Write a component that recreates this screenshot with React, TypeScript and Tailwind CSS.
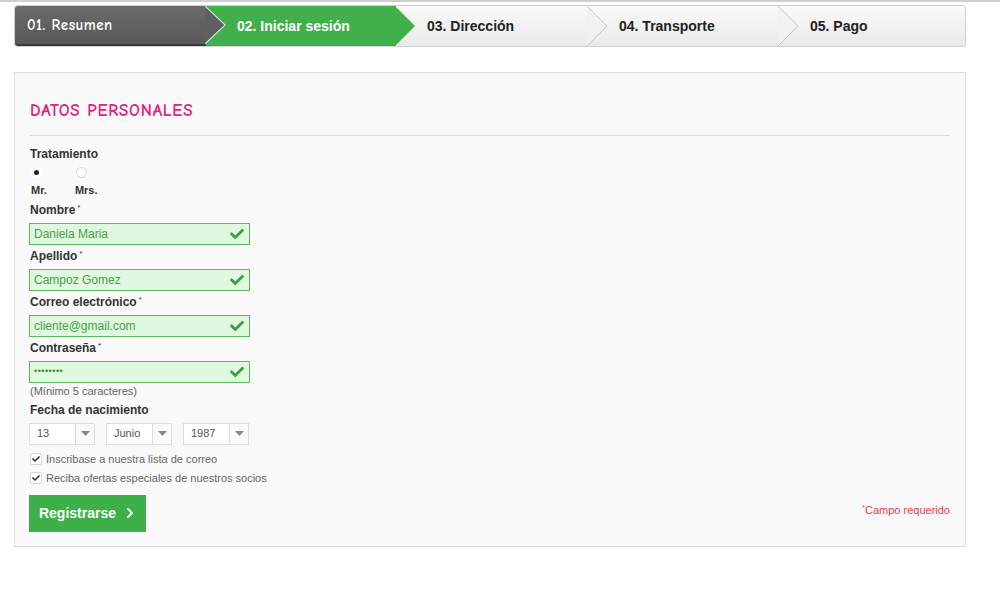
import { FaCheck, FaChevronRight } from "react-icons/fa";

const steps = [
  { label: "01. Resumen", w: "w-[191px]", kind: "done" },
  { label: "02. Iniciar sesión", w: "w-[190px]", kind: "active" },
  { label: "03. Dirección", w: "w-[192px]", kind: "todo" },
  { label: "04. Transporte", w: "w-[191px]", kind: "todo" },
  { label: "05. Pago", w: "flex-1", kind: "last" },
];

function Stepper() {
  return (
    <div className="ml-[14px] mt-[3px] flex h-[42px] w-[952px] rounded-[3px] border border-[#cfcfcf] bg-gradient-to-b from-[#fafafa] to-[#e9e9e9]">
      {steps.map((s) => {
        const done = s.kind === "done";
        const active = s.kind === "active";
        return (
          <div
            key={s.label}
            className={
              "relative flex h-full shrink-0 items-center " +
              s.w +
              (done
                ? " z-30 rounded-l-[3px] border-b-2 border-[#3a3a3a] bg-gradient-to-b from-[#6a6a6a] to-[#595959] pl-[12px]"
                : active
                ? " z-20 bg-[#3fb04c] pl-[31px]"
                : " z-10 pl-[31px]")
            }
          >
            <span
              className={
                done
                  ? "text-[15px] font-bold tracking-[0.5px] text-white [font-family:'Comic_Sans_MS','Comic_Neue',cursive]"
                  : active
                  ? "text-[14px] font-bold text-white"
                  : "text-[14px] font-bold text-[#222]"
              }
            >
              {s.label}
            </span>
            {s.kind !== "last" && (
              <svg
                className="absolute right-[-20px] top-0 h-full w-[21px]"
                viewBox="0 0 21 42"
                preserveAspectRatio="none"
              >
                {done && (
                  <>
                    <polygon points="0,0 20,21 0,42" fill="#5f5f5f" />
                    <polyline points="0,0 20,21 0,42" fill="none" stroke="#e8e8e8" strokeWidth="1.2" />
                  </>
                )}
                {active && <polygon points="0,0 20,21 0,42" fill="#3fb04c" />}
                {s.kind === "todo" && (
                  <>
                    <polygon points="0,0 20,21 0,42" fill="#f1f1f1" />
                    <polyline points="0,0 20,21 0,42" fill="none" stroke="#c9c9c9" strokeWidth="1" />
                  </>
                )}
              </svg>
            )}
          </div>
        );
      })}
    </div>
  );
}

function TextField({ label, value, password }: { label: string; value: string; password?: boolean }) {
  return (
    <div className="flex flex-col">
      <div className="h-[13px] text-[12px] font-bold leading-[13px] text-[#333]">
        {label}
        <sup className="ml-[2px] text-[8px] font-normal">*</sup>
      </div>
      <div className="-ml-[1px] mt-[6px] flex h-[22px] w-[221px] items-center justify-between border border-[#5cb85c] bg-[#dff8df] pl-[4px] pr-[5px]">
        <span
          className={
            password
              ? "text-[9px] tracking-[0.5px] text-[#3a8a3a]"
              : "text-[12px] text-[#48a048]"
          }
        >
          {value}
        </span>
        <FaCheck className="text-[14px] text-[#3d9e47]" />
      </div>
    </div>
  );
}

function SelectBox({ value, w }: { value: string; w: string }) {
  return (
    <div className={"flex h-[22px] items-center border border-[#dcdcdc] bg-white " + w}>
      <span className="flex-1 pl-[7px] text-[11px] text-[#555]">{value}</span>
      <div className="flex h-full w-[19px] items-center justify-center border-l border-[#dcdcdc] bg-[#fafafa]">
        <svg width="9" height="5" viewBox="0 0 9 5">
          <polygon points="0,0 9,0 4.5,5" fill="#888" />
        </svg>
      </div>
    </div>
  );
}

function CheckRow({ text }: { text: string }) {
  return (
    <div className="flex h-[14px] items-center gap-[4px]">
      <div className="flex h-[12px] w-[12px] items-center justify-center rounded-[2px] border border-[#d6d6d6] bg-white">
        <FaCheck className="text-[8px] text-[#333]" />
      </div>
      <span className="text-[11px] leading-[14px] text-[#666]">{text}</span>
    </div>
  );
}

export default function App() {
  return (
    <div className="min-h-[591px] w-[1000px] bg-white [font-family:'Liberation_Sans',Arial,sans-serif]">
      <div className="h-[2px] bg-[#cfcfcf]" />
      <Stepper />
      <div className="ml-[14px] mt-[25px] flex h-[475px] w-[952px] flex-col border border-[#dddddd] bg-[#f9f9f9] px-[15px]">
        <h1 className="mt-[28px] text-[17px] font-bold leading-[20px] tracking-[0.8px] text-[#e3207f] [font-family:'Comic_Sans_MS','Comic_Neue',cursive]">
          DATOS PERSONALES
        </h1>
        <div className="mt-[14px] h-px bg-[#dcdcdc]" />
        <div className="mt-[12px] text-[12px] font-bold leading-[13px] text-[#333]">Tratamiento</div>
        <div className="mt-[6px] flex gap-[28px] pl-[1px]">
          <div className="flex flex-col items-start">
            <div className="flex h-[11px] w-[11px] items-center justify-center rounded-full bg-white">
              <div className="h-[5px] w-[5px] rounded-full bg-[#222]" />
            </div>
            <span className="mt-[4px] text-[11px] font-bold text-[#333]">Mr.</span>
          </div>
          <div className="flex flex-col items-start">
            <div className="ml-[1px] h-[11px] w-[11px] rounded-full border border-[#d4d4d4] bg-white" />
            <span className="mt-[4px] text-[11px] font-bold text-[#333]">Mrs.</span>
          </div>
        </div>
        <div className="mt-[5px] flex flex-col gap-[5px]">
          <TextField label="Nombre" value="Daniela Maria" />
          <TextField label="Apellido" value="Campoz Gomez" />
          <TextField label="Correo electrónico" value="cliente@gmail.com" />
          <TextField label="Contraseña" value="••••••••" password />
        </div>
        <div className="mt-[2px] text-[11px] leading-[13px] text-[#666]">(Mínimo 5 caracteres)</div>
        <div className="mt-[6px] text-[12px] font-bold leading-[13px] text-[#333]">Fecha de nacimiento</div>
        <div className="-ml-[1px] mt-[6px] flex gap-[11px]">
          <SelectBox value="13" w="w-[66px]" />
          <SelectBox value="Junio" w="w-[66px]" />
          <SelectBox value="1987" w="w-[66px]" />
        </div>
        <div className="mt-[7px] flex flex-col gap-[5px]">
          <CheckRow text="Inscribase a nuestra lista de correo" />
          <CheckRow text="Reciba ofertas especiales de nuestros socios" />
        </div>
        <div className="mt-[10px] flex items-start justify-between">
          <button className="-ml-[1px] flex h-[37px] w-[117px] items-center justify-center gap-[8px] bg-[#3db049] text-[14px] font-bold text-white">
            Registrarse
            <FaChevronRight className="text-[12px]" />
          </button>
          <div className="mt-[8px] text-[11px] leading-[14px] text-[#e2404f]">
            <sup className="text-[7px]">*</sup>Campo requerido
          </div>
        </div>
      </div>
    </div>
  );
}
